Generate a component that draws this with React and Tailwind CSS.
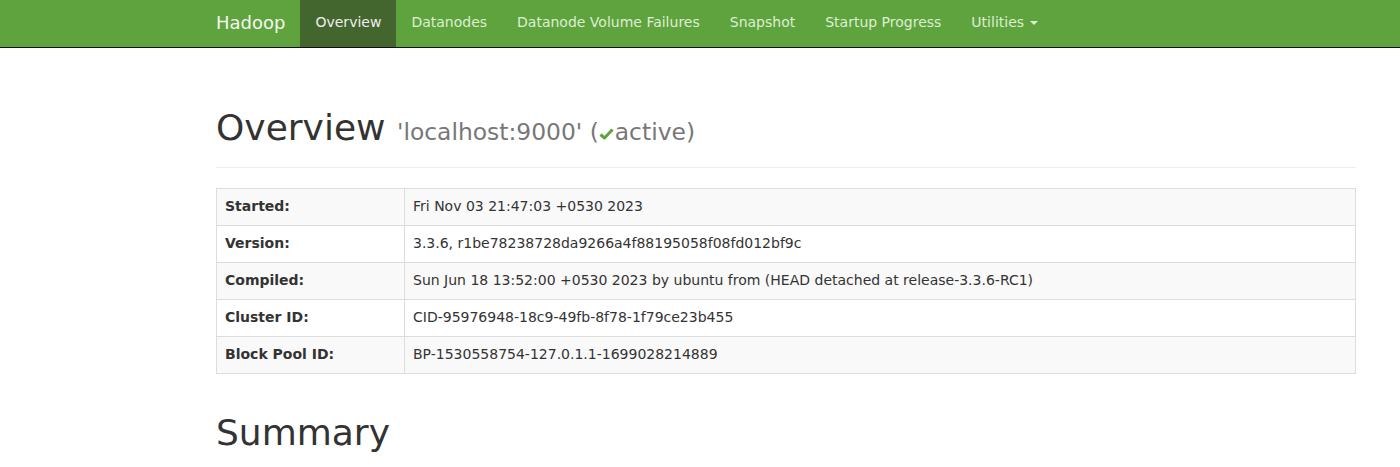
import React from "react";

const rows = [
  ["Started:", "Fri Nov 03 21:47:03 +0530 2023"],
  ["Version:", "3.3.6, r1be78238728da9266a4f88195058f08fd012bf9c"],
  ["Compiled:", "Sun Jun 18 13:52:00 +0530 2023 by ubuntu from (HEAD detached at release-3.3.6-RC1)"],
  ["Cluster ID:", "CID-95976948-18c9-49fb-8f78-1f79ce23b455"],
  ["Block Pool ID:", "BP-1530558754-127.0.1.1-1699028214889"],
];

const links = ["Datanodes", "Datanode Volume Failures", "Snapshot", "Startup Progress"];

export default function App() {
  return (
    <div className="min-h-[467px] bg-white text-[#333] text-[14px]" style={{ fontFamily: '"DejaVu Sans", Verdana, sans-serif' }}>
      <nav className="h-[48px] bg-[#5fa33e] border-b border-[#101010]">
        <div className="ml-[201px] w-[1170px] flex h-[47px] items-stretch">
          <div className="px-[15px] pb-[2px] flex items-center text-[18px] text-[#f2f7ee]">Hadoop</div>
          <div className="px-[15px] pb-[2px] flex items-center bg-[#43662f] text-[#eeeeee]">Overview</div>
          {links.map((l) => (
            <div key={l} className="px-[15px] pb-[2px] flex items-center text-[#dcefd2]">{l}</div>
          ))}
          <div className="px-[15px] pb-[2px] flex items-center text-[#dcefd2]">
            Utilities
            <span className="ml-[6px] inline-block w-0 h-0 border-l-[4px] border-r-[4px] border-t-[4px] border-l-transparent border-r-transparent border-t-[#dcefd2]" />
          </div>
        </div>
      </nav>
      <div className="ml-[201px] w-[1170px] px-[15px]">
        <div className="mt-[60px] pb-[19px] border-b border-[#eeeeee]">
          <h1 className="h-[40px] text-[36px] leading-[40px] font-normal text-[#333] whitespace-nowrap">
            Overview{" "}
            <span className="text-[23.4px] leading-none text-[#777777]">
              'localhost:9000' (
              <svg width="15" height="13" viewBox="0 0 15 13" className="inline-block align-baseline mr-[1px]">
                <path d="M1.5 7.5 L5.5 11 L13.5 2.5" stroke="#5fa33e" strokeWidth="3" fill="none" strokeLinejoin="round" />
              </svg>
              active)
            </span>
          </h1>
        </div>
        <table className="mt-[20px] w-full border-collapse border border-[#dddddd]">
          <tbody>
            {rows.map(([k, v], i) => (
              <tr key={k} className={i % 2 === 0 ? "bg-[#f9f9f9]" : "bg-white"}>
                <th className="w-[188px] text-left font-bold border border-[#dddddd] px-[8px] pt-[7px] pb-[9px] leading-[20px]">{k}</th>
                <td className="border border-[#dddddd] px-[8px] pt-[7px] pb-[9px] leading-[20px]">{v}</td>
              </tr>
            ))}
          </tbody>
        </table>
        <h1 className="mt-[39px] text-[36px] leading-[40px] font-normal text-[#333]">Summary</h1>
      </div>
    </div>
  );
}
